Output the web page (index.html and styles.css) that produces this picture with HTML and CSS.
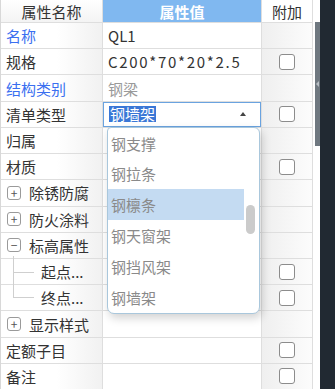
FILE: index.html
```html
<!DOCTYPE html>
<html lang="zh">
<head>
<meta charset="utf-8">
<link rel="stylesheet" href="styles.css">
</head>
<body>
<div class="app">
  <div class="panel">
    <div class="table">
      <div class="row head">
        <div class="c name hc">属性名称</div>
        <div class="c val hv">属性值</div>
        <div class="c add ha">附加</div>
      </div>
      <div class="row">
        <div class="c name link">名称</div>
        <div class="c val">QL1</div>
        <div class="c add"></div>
      </div>
      <div class="row">
        <div class="c name">规格</div>
        <div class="c val spec">C200*70*20*2.5</div>
        <div class="c add"><span class="cb"></span></div>
      </div>
      <div class="row">
        <div class="c name link">结构类别</div>
        <div class="c val muted">钢梁</div>
        <div class="c add"></div>
      </div>
      <div class="row">
        <div class="c name">清单类型</div>
        <div class="c val editing">
          <div class="select"><span class="sel-text">钢墙架</span><span class="arrow"></span></div>
          <div class="dropdown">
            <div class="opt">钢支撑</div>
            <div class="opt">钢拉条</div>
            <div class="opt active">钢檩条</div>
            <div class="opt">钢天窗架</div>
            <div class="opt">钢挡风架</div>
            <div class="opt">钢墙架</div>
            <div class="dd-thumb"></div>
          </div>
        </div>
        <div class="c add"><span class="cb"></span></div>
      </div>
      <div class="row">
        <div class="c name">归属</div>
        <div class="c val"></div>
        <div class="c add"></div>
      </div>
      <div class="row">
        <div class="c name">材质</div>
        <div class="c val"></div>
        <div class="c add"><span class="cb"></span></div>
      </div>
      <div class="row">
        <div class="c name"><span class="tog">+</span>除锈防腐</div>
        <div class="c val"></div>
        <div class="c add"></div>
      </div>
      <div class="row">
        <div class="c name"><span class="tog">+</span>防火涂料</div>
        <div class="c val"></div>
        <div class="c add"></div>
      </div>
      <div class="row">
        <div class="c name"><span class="tog">−</span>标高属性</div>
        <div class="c val"></div>
        <div class="c add"></div>
      </div>
      <div class="row">
        <div class="c name child"><span class="branch mid"></span>起点...</div>
        <div class="c val"></div>
        <div class="c add"><span class="cb"></span></div>
      </div>
      <div class="row">
        <div class="c name child"><span class="branch last"></span>终点...</div>
        <div class="c val"></div>
        <div class="c add"><span class="cb"></span></div>
      </div>
      <div class="row">
        <div class="c name"><span class="tog">+</span>显示样式</div>
        <div class="c val"></div>
        <div class="c add"></div>
      </div>
      <div class="row">
        <div class="c name">定额子目</div>
        <div class="c val"></div>
        <div class="c add"><span class="cb"></span></div>
      </div>
      <div class="row">
        <div class="c name">备注</div>
        <div class="c val"></div>
        <div class="c add"><span class="cb"></span></div>
      </div>
    </div>
    <div class="vscroll">
      <div class="vthumb"><span class="vgrip"></span></div>
    </div>
  </div>
  <div class="dark"></div>
</div>
</body>
</html>
```
FILE: styles.css
```css
* { box-sizing: border-box; }
html, body {
  margin: 0;
  padding: 0;
  background: #fff;
}
body {
  width: 335px;
  height: 389px;
  overflow: hidden;
  font-family: "Noto Sans CJK SC", "Noto Sans", sans-serif;
  font-size: 15px;
  color: #333;
}
.app {
  display: flex;
  height: 389px;
}
.panel {
  display: flex;
  width: 320px;
  height: 100%;
  background: #fff;
}
.table {
  width: 313px;
  border-left: 1px solid #d8d8d8;
}
.row {
  display: grid;
  grid-template-columns: 102px 159px 51px;
  height: 26.23px;
  border-bottom: 1px solid #dedede;
}
.row.head {
  height: 23px;
}
.c {
  display: flex;
  align-items: center;
  border-right: 1px solid #dedede;
  white-space: nowrap;
  min-width: 0;
}
.name {
  padding-left: 5px;
  background: linear-gradient(to right, #fff 55%, #f1f1f1);
}
.val {
  padding-left: 5px;
  background: #fff;
}
.spec {
  letter-spacing: 1.7px;
}
.add {
  justify-content: center;
  background: linear-gradient(to right, #efefef, #fcfcfc);
}
.hc {
  justify-content: center;
  padding-left: 0;
  background: linear-gradient(#fff, #f4f4f4);
}
.hv {
  justify-content: center;
  padding-left: 0;
  background: #80b8f0;
  color: #fff;
  font-weight: bold;
}
.ha {
  background: #fff;
}
.link { color: #3a6ff0; }
.muted { color: #9a9a9a; }
.cb {
  width: 16px;
  height: 16px;
  border: 1px solid #8c8c8c;
  border-radius: 3px;
  background: #fff;
}
.tog {
  width: 14px;
  height: 14px;
  border: 1px solid #9a9a9a;
  border-radius: 3px;
  display: inline-flex;
  align-items: center;
  justify-content: center;
  font-size: 12px;
  line-height: 1;
  color: #555;
  margin-left: 1px;
  margin-right: 8px;
  background: #fff;
}
.child {
  position: relative;
  padding-left: 40px;
}
.branch {
  position: absolute;
  left: 12px;
  width: 21px;
  border-left: 1px solid #cfcfcf;
  border-bottom: 1px solid #cfcfcf;
}
.branch.mid {
  top: -3px;
  height: 17px;
}
.branch.mid::after {
  content: "";
  position: absolute;
  left: -1px;
  top: 16px;
  height: 14px;
  border-left: 1px solid #cfcfcf;
}
.branch.last {
  top: 0;
  height: 13px;
}
.editing {
  position: relative;
  padding: 0;
  overflow: visible;
  z-index: 2;
}
.select {
  width: 100%;
  height: 100%;
  border: 1px solid #6aa3e0;
  display: flex;
  align-items: center;
  padding-left: 5px;
  padding-right: 14px;
  justify-content: space-between;
  background: #fff;
}
.sel-text {
  background: #3a77d6;
  color: #fff;
  line-height: 16px;
  padding: 0 1px;
}
.arrow {
  width: 0;
  height: 0;
  border-left: 3px solid transparent;
  border-right: 3px solid transparent;
  border-bottom: 4px solid #444;
}
.dropdown {
  position: absolute;
  top: 25px;
  left: 4px;
  width: 153px;
  height: 187px;
  background: #fff;
  border: 1px solid #a9c7dc;
  border-radius: 4px 6px 7px 7px;
  box-shadow: 2px 4px 10px rgba(0, 0, 0, 0.18);
}
.opt {
  height: 30.8px;
  display: flex;
  align-items: center;
  padding-left: 3px;
  width: 136px;
  color: #8a8a8a;
}
.opt.active {
  background: #c4dbf2;
}
.dd-thumb {
  position: absolute;
  left: 138px;
  top: 77px;
  width: 9px;
  height: 29px;
  border-radius: 5px;
  background: #cbcbcb;
}
.vscroll {
  width: 7px;
  position: relative;
  background: #fff;
}
.vthumb {
  position: absolute;
  top: 22px;
  left: 2px;
  width: 5px;
  height: 124px;
  background: #6f7880;
  display: flex;
  align-items: center;
  justify-content: center;
}
.vgrip {
  width: 0;
  height: 0;
  border-top: 3px solid transparent;
  border-bottom: 3px solid transparent;
  border-right: 3px solid #b8bec4;
}
.dark {
  flex: 1;
  background: #212932;
}
```
